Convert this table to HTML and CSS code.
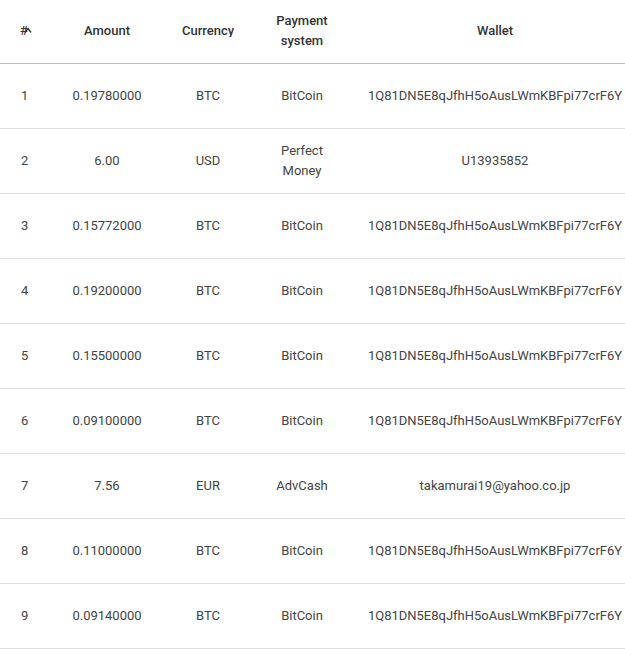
FILE: index.html
```html
<!DOCTYPE html>
<html>
<head>
<meta charset="utf-8">
<link rel="stylesheet" href="styles.css">
</head>
<body>
<table class="tbl">
  <colgroup>
    <col class="c-num"><col class="c-amt"><col class="c-cur"><col class="c-pay"><col class="c-wal">
  </colgroup>
  <thead>
    <tr>
      <th><span class="hash">#<svg class="sort" width="8" height="6" viewBox="0 0 8 6"><path d="M1 5.5 L4 1.5 L7 5.5" fill="none" stroke="#333" stroke-width="1.3"/></svg></span></th>
      <th>Amount</th>
      <th><span class="clip">Currency</span></th>
      <th>Payment<br>system</th>
      <th>Wallet</th>
    </tr>
  </thead>
  <tbody>
    <tr><td>1</td><td>0.19780000</td><td>BTC</td><td>BitCoin</td><td>1Q81DN5E8qJfhH5oAusLWmKBFpi77crF6Y</td></tr>
    <tr><td>2</td><td>6.00</td><td>USD</td><td>Perfect<br>Money</td><td>U13935852</td></tr>
    <tr><td>3</td><td>0.15772000</td><td>BTC</td><td>BitCoin</td><td>1Q81DN5E8qJfhH5oAusLWmKBFpi77crF6Y</td></tr>
    <tr><td>4</td><td>0.19200000</td><td>BTC</td><td>BitCoin</td><td>1Q81DN5E8qJfhH5oAusLWmKBFpi77crF6Y</td></tr>
    <tr><td>5</td><td>0.15500000</td><td>BTC</td><td>BitCoin</td><td>1Q81DN5E8qJfhH5oAusLWmKBFpi77crF6Y</td></tr>
    <tr><td>6</td><td>0.09100000</td><td>BTC</td><td>BitCoin</td><td>1Q81DN5E8qJfhH5oAusLWmKBFpi77crF6Y</td></tr>
    <tr><td>7</td><td>7.56</td><td>EUR</td><td>AdvCash</td><td>takamurai19@yahoo.co.jp</td></tr>
    <tr><td>8</td><td>0.11000000</td><td>BTC</td><td>BitCoin</td><td>1Q81DN5E8qJfhH5oAusLWmKBFpi77crF6Y</td></tr>
    <tr><td>9</td><td>0.09140000</td><td>BTC</td><td>BitCoin</td><td>1Q81DN5E8qJfhH5oAusLWmKBFpi77crF6Y</td></tr>
  </tbody>
</table>
</body>
</html>
```
FILE: styles.css
```css
html, body {
  margin: 0;
  padding: 0;
  background: #fff;
  overflow: hidden;
}
body {
  font-family: Roboto, "Liberation Sans", sans-serif;
  font-size: 13px;
  color: #333;
}
.tbl {
  border-collapse: collapse;
  table-layout: fixed;
  width: 638px;
}
.c-num { width: 50px; }
.c-amt { width: 114px; }
.c-cur { width: 88px; }
.c-pay { width: 100px; }
.c-wal { width: 286px; }
.tbl th {
  height: 61px;
  font-weight: 500;
  line-height: 20px;
  text-align: center;
  vertical-align: middle;
  padding: 0 0 2px 0;
  border-bottom: 1px solid #bdbdbd;
  color: #333;
}
.tbl td {
  height: 64px;
  line-height: 20px;
  text-align: center;
  vertical-align: middle;
  padding: 0;
  border-bottom: 1px solid #ddd;
  color: #444;
  white-space: nowrap;
}
.tbl td:first-child {
  text-align: left;
  padding-left: 21px;
}
.tbl th:first-child {
  text-align: left;
  padding-left: 20px;
}
.hash {
  position: relative;
  display: inline-block;
}
.sort {
  position: absolute;
  left: 4px;
  top: 6px;
}
.clip {
  display: inline-block;
  height: 16px;
  overflow: hidden;
  vertical-align: top;
}
```
